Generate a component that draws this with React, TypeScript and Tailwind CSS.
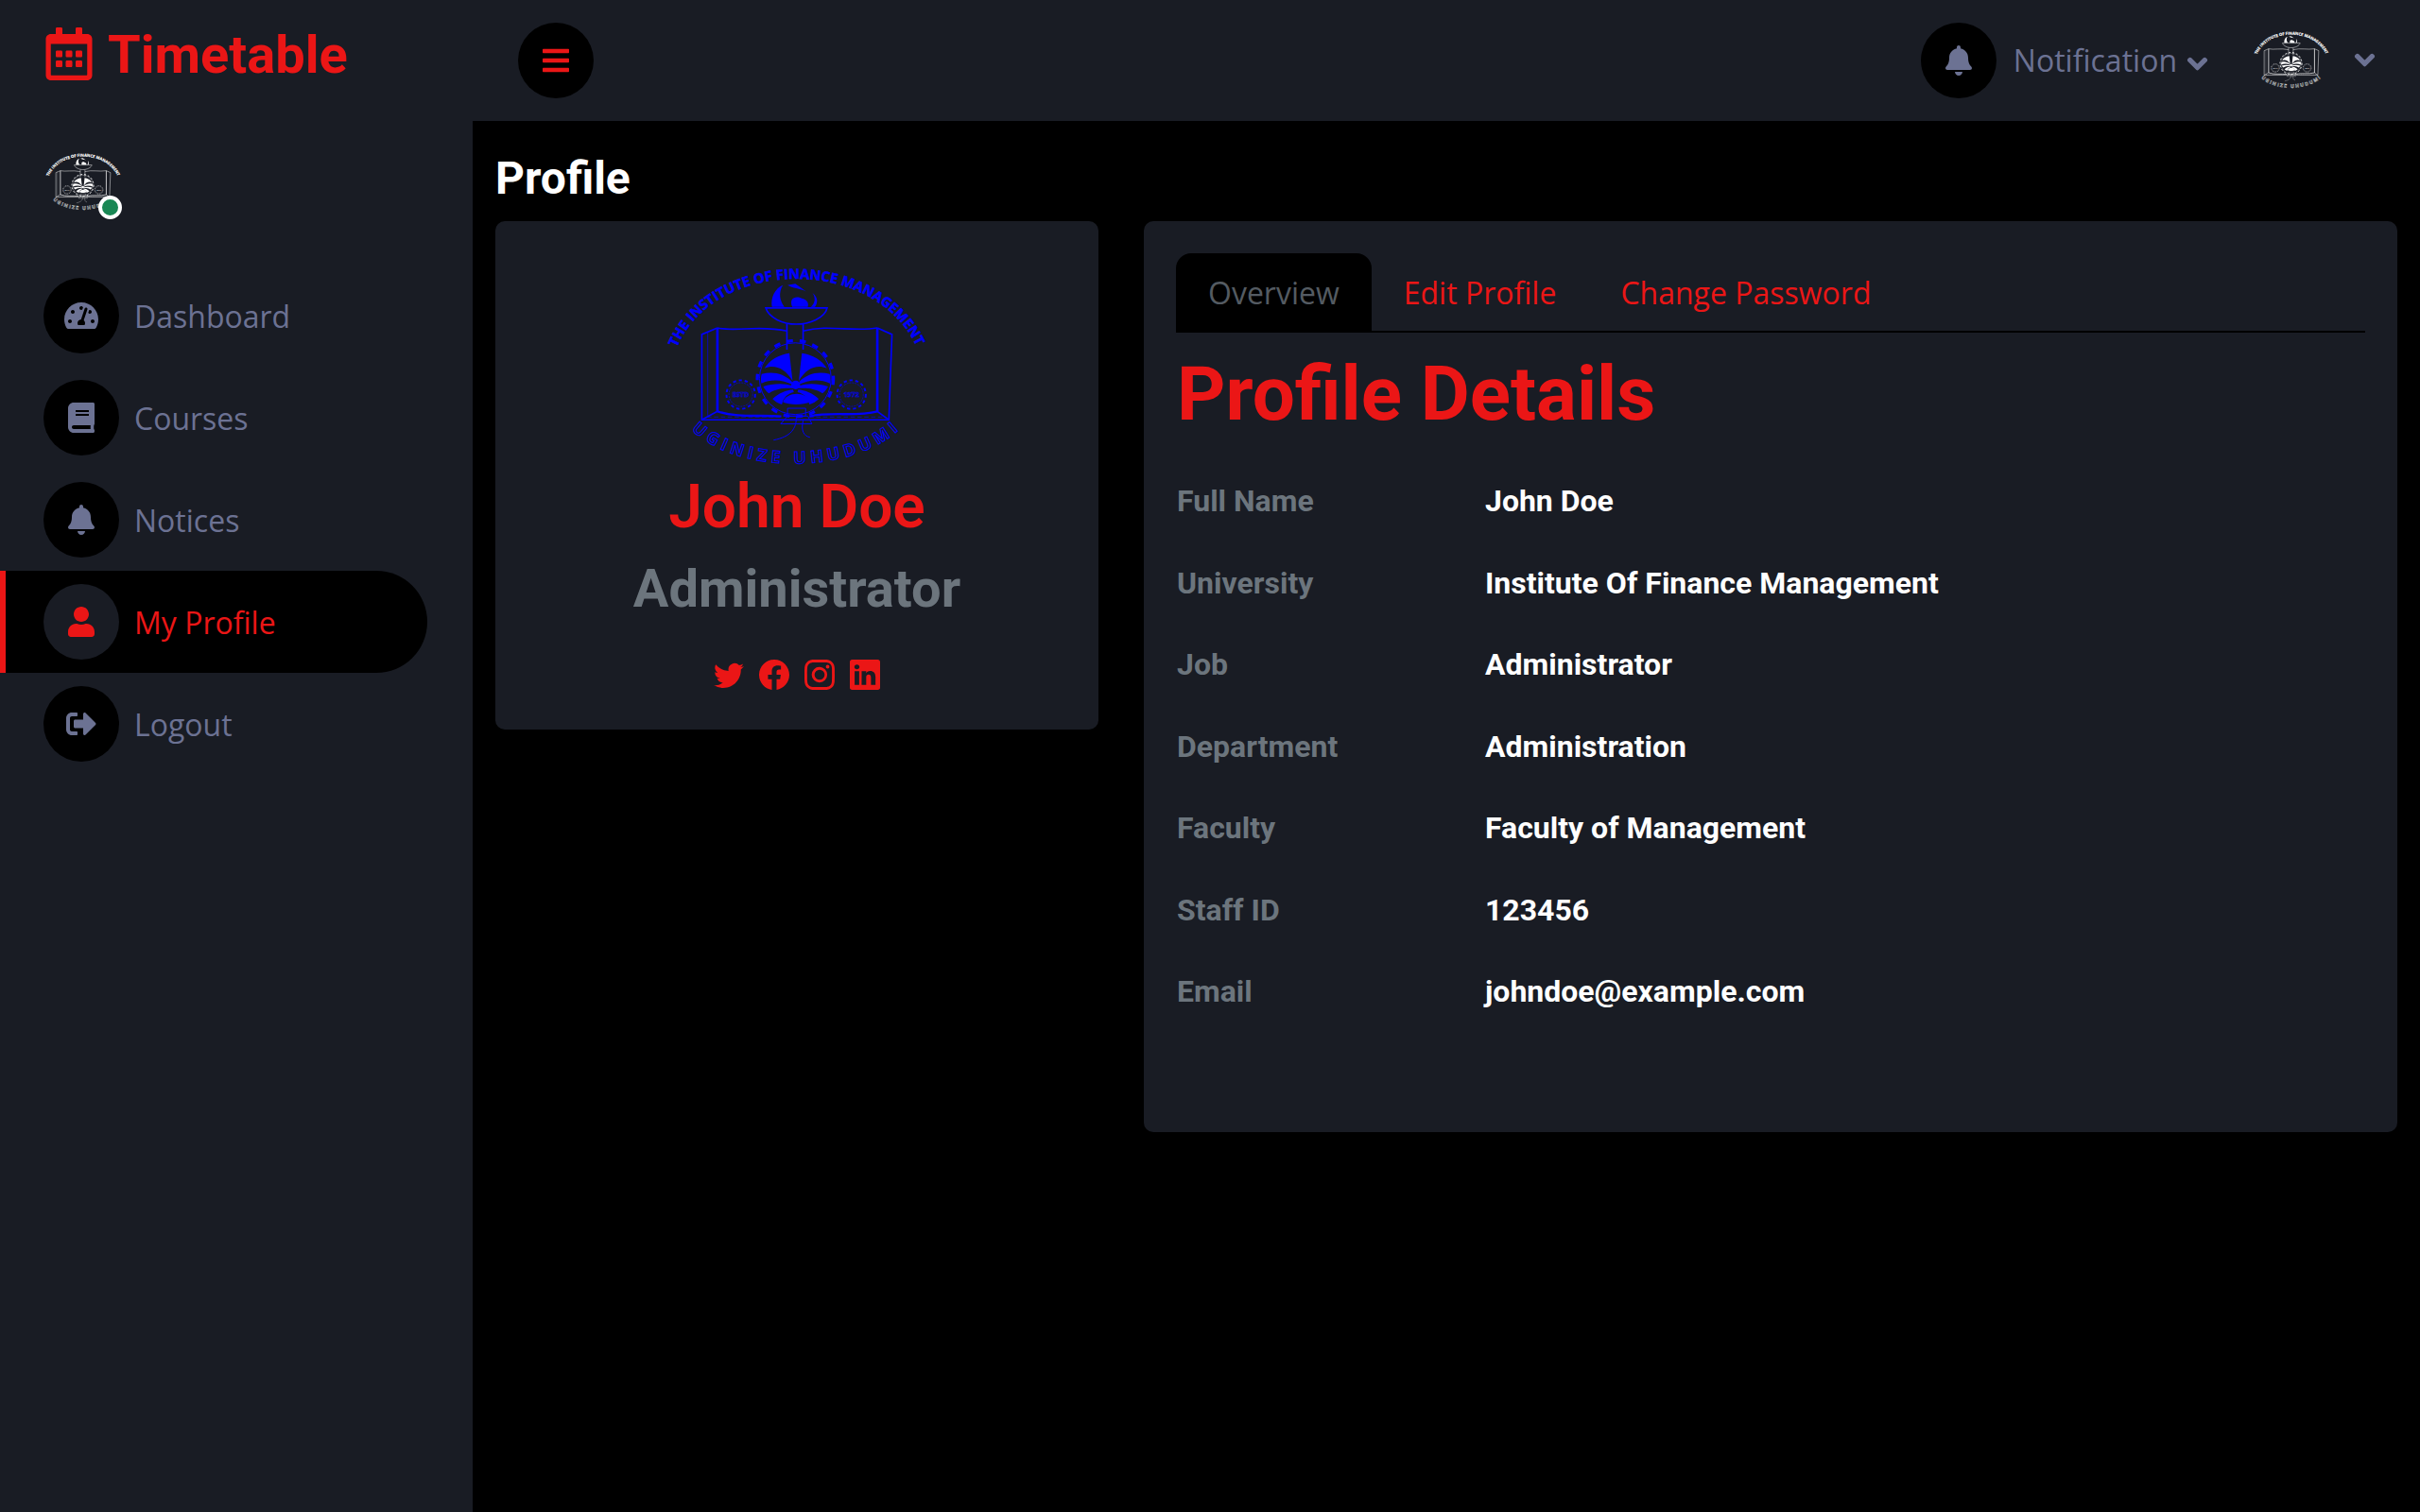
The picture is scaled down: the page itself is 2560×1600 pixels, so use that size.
import { BsFacebook, BsInstagram, BsLinkedin, BsTwitter } from "react-icons/bs";
import {
  FaBars,
  FaBell,
  FaBook,
  FaChevronDown,
  FaRegCalendarAlt,
  FaSignOutAlt,
  FaTachometerAlt,
  FaUser,
} from "react-icons/fa";
import type { IconType } from "react-icons";

type NavItem = {
  label: string;
  icon: IconType;
  iconSize: number;
  active?: boolean;
};

const navItems: NavItem[] = [
  { label: "Dashboard", icon: FaTachometerAlt, iconSize: 36 },
  { label: "Courses", icon: FaBook, iconSize: 32 },
  { label: "Notices", icon: FaBell, iconSize: 32 },
  { label: "My Profile", icon: FaUser, iconSize: 32, active: true },
  { label: "Logout", icon: FaSignOutAlt, iconSize: 32 },
];

const details = [
  ["Full Name", "John Doe"],
  ["University", "Institute Of Finance Management"],
  ["Job", "Administrator"],
  ["Department", "Administration"],
  ["Faculty", "Faculty of Management"],
  ["Staff ID", "123456"],
  ["Email", "johndoe@example.com"],
];

const socials = [BsTwitter, BsFacebook, BsInstagram, BsLinkedin];

// half of the fan in the crest, mirrored for the other side
function FanHalf() {
  return (
    <g fill="currentColor" stroke="none">
      <path d="M526 343C492 348 462 364 446 392C478 378 512 392 536 432Z" />
      <path d="M534 434C508 408 472 400 437 410C434 420 434 432 436 440C470 424 508 430 536 444Z" />
      <path d="M536 448C508 438 472 440 442 450C446 458 452 466 460 472C484 456 512 454 538 456Z" />
      <path d="M538 460C516 462 490 472 472 490C480 498 490 504 502 508C506 484 522 472 540 468Z" />
    </g>
  );
}

function Crest({ className }: { className: string }) {
  return (
    <svg
      viewBox="130 65 840 655"
      className={`overflow-visible ${className}`}
      fill="none"
      stroke="currentColor"
      strokeWidth={5}
    >
      <defs>
        <path id="crest-top" d="M165 325C290 30 810 30 938 330" />
        <path id="crest-bottom" d="M212 588C360 735 730 735 885 582" />
      </defs>
      <text
        fill="currentColor"
        stroke="currentColor"
        strokeWidth={1.5}
        fontSize={44}
        fontWeight={700}
        fontFamily="'Open Sans', sans-serif"
      >
        <textPath href="#crest-top" textLength={935} lengthAdjust="spacing">
          THE INSTITUTE OF FINANCE MANAGEMENT
        </textPath>
      </text>
      <text
        strokeWidth={3}
        fontSize={54}
        fontWeight={700}
        fontFamily="'Open Sans', sans-serif"
      >
        <textPath href="#crest-bottom" textLength={760} lengthAdjust="spacing">
          UGINIZE UHUDUMIE
        </textPath>
      </text>

      {/* flame and bowl */}
      <path
        d="M470 195C465 165 480 135 505 125C490 150 495 175 510 195Z"
        fill="currentColor"
        stroke="none"
      />
      <path
        d="M520 125L545 120L580 145C560 135 535 135 520 125Z"
        fill="currentColor"
        stroke="none"
      />
      <path
        d="M535 195C525 170 540 160 560 165C575 170 590 175 585 195Z"
        fill="currentColor"
        stroke="none"
      />
      <path
        d="M595 195C610 180 610 165 600 150C618 165 618 180 608 195Z"
        fill="currentColor"
        stroke="none"
      />
      <path d="M450 198H647C640 230 590 250 548 250C505 250 460 230 450 198Z" />
      <path d="M518 250V332M570 250V332" />

      {/* book */}
      <path d="M295 262L245 283V557H845L855 283L808 262" />
      <path d="M295 262C350 276 430 252 518 272M570 272C650 250 730 276 808 262" />
      <path d="M295 262V530M808 262V530" strokeWidth={8} />
      <path d="M264 276V545" strokeWidth={2} />
      <path d="M295 530C360 552 430 540 500 546M590 546C660 530 740 548 808 530" strokeWidth={7} />
      <path d="M245 557L295 530M845 557L808 530" />
      <path d="M262 548H500M590 548H830" strokeWidth={2} strokeDasharray="14 8" />

      {/* gears */}
      <circle cx="545" cy="425" r="115" strokeWidth={3} />
      <circle cx="545" cy="425" r="122" strokeWidth={10} strokeDasharray="20 22" />
      <circle cx="370" cy="476" r="38" strokeWidth={2} strokeDasharray="6 3" />
      <circle cx="370" cy="476" r="46" strokeWidth={6} strokeDasharray="10 9" />
      <circle cx="725" cy="476" r="38" strokeWidth={2} strokeDasharray="6 3" />
      <circle cx="725" cy="476" r="46" strokeWidth={6} strokeDasharray="10 9" />
      <text
        x="370"
        y="484"
        textAnchor="middle"
        fontSize={22}
        fontWeight={700}
        fontFamily="'Open Sans', sans-serif"
        strokeWidth={1.5}
      >
        ESTD
      </text>
      <text
        x="725"
        y="484"
        textAnchor="middle"
        fontSize={22}
        fontWeight={700}
        fontFamily="'Open Sans', sans-serif"
        strokeWidth={1.5}
      >
        1972
      </text>

      {/* fan */}
      <FanHalf />
      <g transform="matrix(-1 0 0 1 1092 0)">
        <FanHalf />
      </g>
      <circle cx="546" cy="445" r="14" fill="currentColor" stroke="none" />
      <path
        d="M505 500C515 468 580 462 592 500C570 510 525 510 505 500Z"
        fill="currentColor"
        stroke="none"
      />

      {/* roots */}
      <path d="M498 570H598L585 545H520Z" strokeWidth={3} />
      <path d="M520 520H578V545H520Z" strokeWidth={3} />
      <path d="M548 545C550 585 530 612 475 622M570 560C562 590 572 610 592 613" strokeWidth={3} />
    </svg>
  );
}

function Sidebar() {
  return (
    <aside className="w-[500px] shrink-0 bg-[#191c24] pt-[34px]">
      <div className="relative ml-[48px] h-[118px] w-[80px]">
        <Crest className="h-[62px] w-[80px] text-white" />
        <span className="absolute left-[56px] top-[45px] h-[25px] w-[25px] rounded-full border-4 border-white bg-[#198754]" />
      </div>
      <nav className="flex flex-col">
        {navItems.map((item) => {
          const Icon = item.icon;
          return (
            <a
              key={item.label}
              href="#"
              className={
                item.active
                  ? "flex h-[108px] w-[452px] items-center gap-[16px] rounded-r-[54px] border-l-[6px] border-[#eb1616] bg-black pl-[40px] text-[#eb1616]"
                  : "flex h-[108px] w-[452px] items-center gap-[16px] pl-[46px] text-[#6c7293]"
              }
            >
              <span
                className={
                  item.active
                    ? "flex h-[80px] w-[80px] items-center justify-center rounded-full bg-[#191c24]"
                    : "flex h-[80px] w-[80px] items-center justify-center rounded-full bg-black"
                }
              >
                <Icon size={item.iconSize} />
              </span>
              <span className="mt-[1px] font-['Open_Sans',sans-serif] text-[32px] leading-[48px]">
                {item.label}
              </span>
            </a>
          );
        })}
      </nav>
    </aside>
  );
}

function Header() {
  return (
    <header className="flex h-[128px] items-center bg-[#191c24] pr-[47px]">
      <div className="flex w-[548px] shrink-0 items-center gap-[16px] pb-[12px] pl-[48px] text-[#eb1616]">
        <FaRegCalendarAlt size={56} className="-mt-[2px] w-[50px]" />
        <span className="font-['Roboto',sans-serif] text-[56px] font-bold leading-[67px]">
          Timetable
        </span>
      </div>
      <button className="flex h-[80px] w-[80px] items-center justify-center rounded-full bg-black text-[#eb1616]">
        <FaBars size={32} />
      </button>
      <div className="ml-auto flex items-center text-[#6c7293]">
        <span className="flex h-[80px] w-[80px] items-center justify-center rounded-full bg-black">
          <FaBell size={32} />
        </span>
        <span className="ml-[18px] font-['Open_Sans',sans-serif] text-[32px] leading-[48px]">
          Notification
        </span>
        <FaChevronDown size={23} strokeWidth={36} className="ml-[10px] mt-[6px]" />
        <Crest className="ml-[48px] h-[62px] w-[80px] text-white" />
        <FaChevronDown size={23} strokeWidth={36} className="ml-[26px] -mt-[2px]" />
      </div>
    </header>
  );
}

function ProfileCard() {
  return (
    <section className="flex h-[538px] flex-col items-center rounded-[10px] bg-[#191c24] pt-[48px]">
      <Crest className="h-[216px] w-[278px] text-[#0000ff]" />
      <h2 className="font-['Roboto',sans-serif] text-[64px] font-semibold leading-[77px] text-[#eb1616]">
        John Doe
      </h2>
      <h3 className="mt-[15px] font-['Roboto',sans-serif] text-[56px] font-bold leading-[67px] text-[#6c757d]">
        Administrator
      </h3>
      <div className="mt-[41px] flex gap-[16px] text-[#eb1616]">
        {socials.map((Icon, i) => (
          <Icon key={i} size={32} />
        ))}
      </div>
    </section>
  );
}

function DetailsCard() {
  return (
    <section className="h-[964px] rounded-[10px] bg-[#191c24] p-[34px]">
      <div className="flex border-b-2 border-black font-['Open_Sans',sans-serif] text-[32px] leading-[48px]">
        <button className="rounded-t-[16px] bg-black px-[34px] pb-[16px] pt-[18px] text-[#545b62]">
          Overview
        </button>
        <button className="px-[34px] pb-[16px] pt-[18px] text-[#eb1616]">Edit Profile</button>
        <button className="px-[34px] pb-[16px] pt-[18px] text-[#eb1616]">Change Password</button>
      </div>
      <h1 className="mt-[17px] pl-px font-['Roboto',sans-serif] text-[80px] font-bold leading-[96px] text-[#eb1616]">
        Profile Details
      </h1>
      <dl className="mt-[41px] flex flex-col gap-[38.5px] pl-px font-['Roboto',sans-serif] text-[32px] font-bold leading-[48px]">
        {details.map(([label, value]) => (
          <div key={label} className="flex">
            <dt className="w-[326px] text-[#6c757d]">{label}</dt>
            <dd className="text-white">{value}</dd>
          </div>
        ))}
      </dl>
    </section>
  );
}

export default function App() {
  return (
    <div className="flex min-h-[1600px] flex-col bg-black">
      <Header />
      <div className="flex flex-1">
        <Sidebar />
        <main className="flex-1 bg-black px-[24px] pt-[32px]">
          <h1 className="font-['Roboto',sans-serif] text-[48px] font-bold leading-[58px] text-white">
            Profile
          </h1>
          <div className="mt-[16px] grid grid-cols-[638px_1fr] items-start gap-[48px]">
            <ProfileCard />
            <DetailsCard />
          </div>
        </main>
      </div>
    </div>
  );
}
